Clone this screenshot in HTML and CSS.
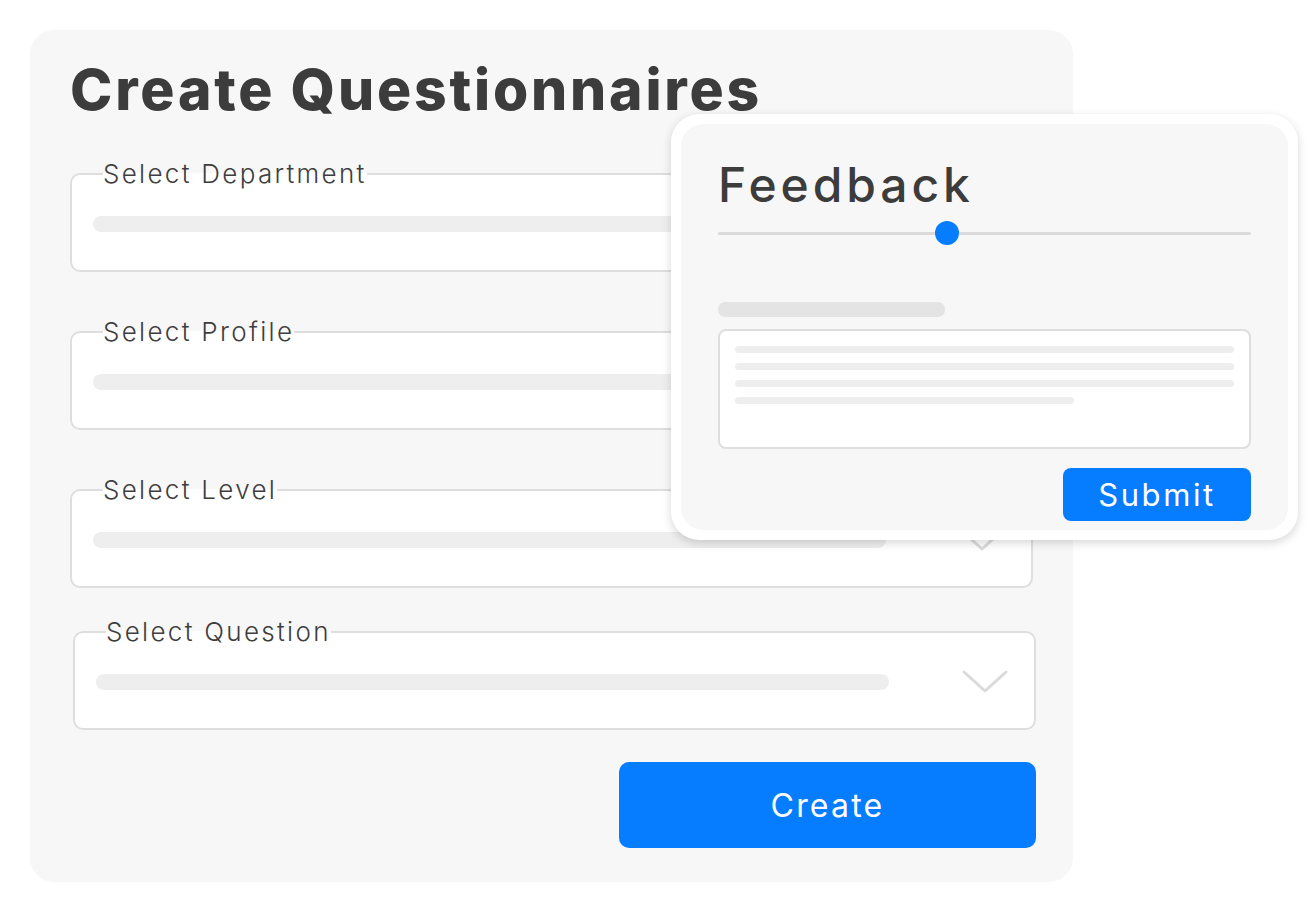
FILE: index.html
```html
<!DOCTYPE html>
<html lang="en">
<head>
<meta charset="utf-8">
<title>Create Questionnaires</title>
<link rel="stylesheet" href="styles.css">
</head>
<body>
<div class="page">
  <section class="card">
    <h1 class="title">Create Questionnaires</h1>
    <div class="fields">
      <fieldset class="field">
        <legend class="field-label">Select Department</legend>
        <div class="field-body">
          <div class="bar"></div>
          <svg class="chevron" viewBox="0 0 48 26" width="48" height="26"><path d="M3 3 L24 22 L45 3"/></svg>
        </div>
      </fieldset>
      <fieldset class="field">
        <legend class="field-label">Select Profile</legend>
        <div class="field-body">
          <div class="bar"></div>
          <svg class="chevron" viewBox="0 0 48 26" width="48" height="26"><path d="M3 3 L24 22 L45 3"/></svg>
        </div>
      </fieldset>
      <fieldset class="field">
        <legend class="field-label">Select Level</legend>
        <div class="field-body">
          <div class="bar"></div>
          <svg class="chevron" viewBox="0 0 48 26" width="48" height="26"><path d="M3 3 L24 22 L45 3"/></svg>
        </div>
      </fieldset>
      <fieldset class="field field-last">
        <legend class="field-label">Select Question</legend>
        <div class="field-body">
          <div class="bar"></div>
          <svg class="chevron" viewBox="0 0 48 26" width="48" height="26"><path d="M3 3 L24 22 L45 3"/></svg>
        </div>
      </fieldset>
    </div>
    <div class="actions">
      <button class="btn btn-create">Create</button>
    </div>
  </section>

  <aside class="popup">
    <div class="popup-inner">
      <h2 class="popup-title">Feedback</h2>
      <div class="slider">
        <div class="slider-track"></div>
        <div class="slider-thumb"></div>
      </div>
      <div class="popup-label"></div>
      <div class="textarea">
        <div class="line"></div>
        <div class="line"></div>
        <div class="line"></div>
        <div class="line line-short"></div>
      </div>
      <div class="popup-actions">
        <button class="btn btn-submit">Submit</button>
      </div>
    </div>
  </aside>
</div>
</body>
</html>
```
FILE: styles.css
```css
* { box-sizing: border-box; }

html, body {
  margin: 0;
  padding: 0;
  background: #ffffff;
}

body {
  font-family: "Inter", "Open Sans", "Liberation Sans", sans-serif;
  color: #3e3e3e;
}

.page {
  position: relative;
  width: 1308px;
  height: 912px;
  padding: 30px;
}

.card {
  width: 1043px;
  height: 852px;
  background: #f7f7f7;
  border-radius: 24px;
  padding: 28px 40px 0 40px;
}

.title {
  margin: 0;
  font-size: 57px;
  line-height: 64px;
  font-weight: 800;
  letter-spacing: 2.8px;
  color: #3c3c3c;
}

.fields {
  margin-top: 37px;
  display: flex;
  flex-direction: column;
  gap: 45px;
}

.field {
  margin: 0;
  padding: 0 0 11px 0;
  border: 2px solid #dedede;
  border-radius: 10px;
  background: #ffffff;
  min-width: 0;
}

.field-last {
  margin-top: -16px;
  margin-left: 3px;
  margin-right: -3px;
}

.field-label {
  margin-left: 31px;
  padding: 0;
  font-size: 26px;
  line-height: 30px;
  font-weight: 300;
  letter-spacing: 2.3px;
  color: #3e3e3e;
}

.field-body {
  height: 70px;
  display: flex;
  align-items: center;
  justify-content: space-between;
  padding: 0 25px 0 21px;
}

.bar {
  width: 793px;
  height: 16px;
  border-radius: 8px;
  background: #eeeeee;
}

.chevron {
  display: block;
  fill: none;
  stroke: #dadada;
  stroke-width: 3;
  stroke-linecap: round;
  stroke-linejoin: round;
}

.actions {
  margin-top: 32px;
  margin-right: -3px;
  display: flex;
  justify-content: flex-end;
}

.btn {
  border: none;
  background: #067dff;
  color: #ffffff;
  font-family: "Inter", "Open Sans", "Liberation Sans", sans-serif;
  font-weight: 400;
  cursor: pointer;
}

.btn-create {
  width: 417px;
  height: 86px;
  border-radius: 10px;
  font-size: 32px;
  letter-spacing: 2.2px;
}

/* Popup overlay */
.popup {
  position: absolute;
  left: 671px;
  top: 114px;
  width: 627px;
  height: 426px;
  padding: 10px;
  background: #ffffff;
  border-radius: 28px;
  box-shadow: 0 3px 10px rgba(0, 0, 0, 0.16);
}

.popup-inner {
  height: 100%;
  background: #f7f7f7;
  border-radius: 22px;
  padding: 33px 37px 9px 37px;
  display: flex;
  flex-direction: column;
}

.popup-title {
  margin: 0;
  font-size: 48px;
  line-height: 56px;
  font-weight: 500;
  letter-spacing: 3.9px;
  color: #3c3c3c;
}

.slider {
  position: relative;
  margin-top: 8px;
  height: 24px;
  display: flex;
  align-items: center;
}

.slider-track {
  width: 100%;
  height: 3px;
  border-radius: 2px;
  background: #dadada;
}

.slider-thumb {
  position: absolute;
  left: 217px;
  top: 0;
  width: 24px;
  height: 24px;
  border-radius: 50%;
  background: #067dff;
}

.popup-label {
  margin-top: 57px;
  width: 227px;
  height: 15px;
  border-radius: 7px;
  background: #e4e4e4;
}

.textarea {
  margin-top: 12px;
  height: 120px;
  border: 2px solid #dedede;
  border-radius: 8px;
  background: #ffffff;
  padding: 15px 15px 0 15px;
  display: flex;
  flex-direction: column;
  gap: 10px;
}

.line {
  height: 7px;
  border-radius: 4px;
  background: #eeeeee;
}

.line-short {
  width: 339px;
}

.popup-actions {
  margin-top: 19px;
  display: flex;
  justify-content: flex-end;
}

.btn-submit {
  width: 188px;
  height: 53px;
  border-radius: 8px;
  font-size: 31px;
  letter-spacing: 2.6px;
}
```
